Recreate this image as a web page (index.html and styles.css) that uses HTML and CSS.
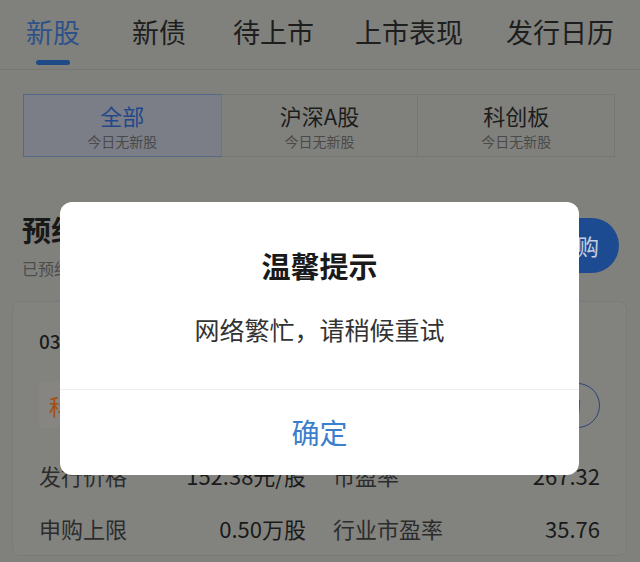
FILE: index.html
```html
<!DOCTYPE html>
<html lang="zh-CN">
<head>
  <meta charset="UTF-8">
  <meta name="viewport" content="width=device-width, initial-scale=1.0">
  <title>新股申购</title>
  <link rel="stylesheet" href="styles.css">
</head>
<body>
  <div class="tabs">
    <div class="tab active"><span>新股</span><i class="bar"></i></div>
    <div class="tab"><span>新债</span></div>
    <div class="tab"><span>待上市</span></div>
    <div class="tab"><span>上市表现</span></div>
    <div class="tab"><span>发行日历</span></div>
  </div>

  <div class="segments">
    <div class="seg active">
      <div class="seg-title">全部</div>
      <div class="seg-sub">今日无新股</div>
    </div>
    <div class="seg">
      <div class="seg-title">沪深A股</div>
      <div class="seg-sub">今日无新股</div>
    </div>
    <div class="seg">
      <div class="seg-title">科创板</div>
      <div class="seg-sub">今日无新股</div>
    </div>
  </div>

  <div class="section-head">
    <div>
      <h2>预约申购</h2>
      <p>已预约 0 只</p>
    </div>
    <button class="pill">一键申购</button>
  </div>

  <div class="card">
    <div class="code">0301 某某科技</div>
    <div class="tag-row">
      <div class="tag">科创板 申购日 今日</div>
      <button class="buy">申购</button>
    </div>
    <div class="data-row">
      <div class="half"><span class="label">发行价格</span><span class="value">152.38元/股</span></div>
      <div class="half"><span class="label">市盈率</span><span class="value">267.32</span></div>
    </div>
    <div class="data-row">
      <div class="half"><span class="label">申购上限</span><span class="value">0.50万股</span></div>
      <div class="half"><span class="label">行业市盈率</span><span class="value">35.76</span></div>
    </div>
  </div>

  <!-- 页面已被遮罩压暗，弹窗叠在上面 -->
  <div class="dialog">
    <div class="dialog-title">温馨提示</div>
    <div class="dialog-text">网络繁忙，请稍候重试</div>
    <div class="dialog-btn">确定</div>
  </div>
</body>
</html>
```

FILE: styles.css
```css
:root {
  --primary: #2a4f8c;
  --text: #1c1c1c;
  --line: #767774;
  --dim: #80817d;
}

body {
  margin: 0;
  width: 640px;
  height: 562px;
  overflow: hidden;
  position: relative;
  background: var(--dim);
  color: var(--text);
  font-family: "Noto Sans CJK SC", "Noto Sans", sans-serif;
}

.tabs {
  display: flex;
  padding: 14px 0 4px 26px;
  height: 51px;
  border-bottom: 1px solid var(--line);
}

.tab {
  display: flex;
  flex-direction: column;
  align-items: center;
  flex-shrink: 0;
  white-space: nowrap;
  margin-right: 46px;
  font-size: 27px;
  line-height: 36px;
  color: #1e1e1e;
}

.tab:nth-child(2) {
  margin-right: 47px;
}

.tab:nth-child(3) {
  margin-right: 41px;
}

.tab:nth-child(4) {
  margin-right: 43px;
}

.tab:last-child {
  margin-right: 0;
}

.tab.active {
  color: #2f5189;
  margin-right: 52px;
}

.tab .bar {
  width: 34px;
  height: 5px;
  margin-top: 10px;
  border-radius: 3px;
  background: #1f4a88;
}

.segments {
  display: grid;
  grid-template-columns: repeat(3, 1fr);
  margin: 24px 25px 0 23px;
  border: 1px solid var(--line);
}

.seg {
  text-align: center;
  padding: 6px 0 6px;
  border-left: 1px solid var(--line);
}

.seg:first-child {
  border-left: none;
}

.seg.active {
  background: #7b7e86;
  outline: 1px solid #56688a;
}

.seg-title {
  font-size: 22px;
  line-height: 29px;
  color: #1c1c1c;
}

.seg.active .seg-title {
  color: #22488a;
}

.seg-sub {
  margin-top: 2px;
  font-size: 14px;
  line-height: 18px;
  color: #4a4a4a;
}

.section-head {
  display: flex;
  justify-content: space-between;
  align-items: center;
  margin-top: 54px;
  padding: 0 21px 0 22px;
}

.section-head h2 {
  margin: 0;
  font-size: 29px;
  line-height: 36px;
  font-weight: bold;
  color: #181818;
}

.section-head p {
  margin: 10px 0 0;
  font-size: 16px;
  line-height: 22px;
  color: #4c4c4c;
}

.pill {
  height: 55px;
  padding: 0 20px;
  border: none;
  border-radius: 28px;
  background: #1c4b92;
  color: #c4d0e2;
  font-family: inherit;
  font-size: 22px;
}

.card {
  margin: 22px 13px 0 12px;
  padding: 26px 26px 0;
  border: 1px solid #7a7b78;
  border-radius: 8px;
  background: #82837f;
}

.code {
  font-size: 19px;
  line-height: 26px;
  font-weight: 500;
}

.tag-row {
  display: flex;
  justify-content: space-between;
  align-items: center;
  margin-top: 28px;
}

.tag {
  height: 46px;
  line-height: 46px;
  padding: 0 10px;
  background: #868581;
  color: #a64c12;
  font-size: 22px;
}

.buy {
  height: 45px;
  padding: 0 18px;
  border: 1.5px solid #2c4670;
  border-radius: 23px;
  background: transparent;
  color: #2c4670;
  font-family: inherit;
  font-size: 20px;
}

.tag-row + .data-row {
  margin-top: 21px;
}

.data-row {
  display: grid;
  grid-template-columns: 1fr 1fr;
  column-gap: 27px;
  height: 53px;
  line-height: 53px;
  font-size: 22px;
}

.half {
  display: flex;
  justify-content: space-between;
}

.label {
  color: #2c2c2c;
}

.value {
  color: #1a1a1a;
}

.dialog {
  position: absolute;
  top: 202px;
  left: 60px;
  width: 519px;
  background: #fff;
  border-radius: 12px;
  text-align: center;
}

.dialog-title {
  padding-top: 43px;
  font-size: 29px;
  line-height: 40px;
  font-weight: bold;
  color: #1a1a1a;
}

.dialog-text {
  margin-top: 27px;
  padding-bottom: 43px;
  font-size: 25px;
  line-height: 34px;
  color: #333;
  border-bottom: 1px solid #eeeeee;
}

.dialog-btn {
  height: 85px;
  line-height: 85px;
  font-size: 28px;
  color: #3b7fcc;
}
```
